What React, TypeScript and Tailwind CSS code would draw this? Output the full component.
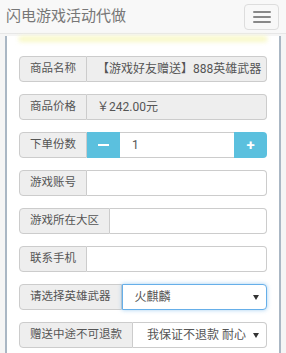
const font = { fontFamily: 'Roboto, "Noto Sans CJK SC", sans-serif' };

type Row = { label: string; value?: string; kind: "disabled" | "text" | "stepper" | "select" | "focusSelect" };

const rows: Row[] = [
  { label: "商品名称", value: "【游戏好友赠送】888英雄武器", kind: "disabled" },
  { label: "商品价格", value: "￥242.00元", kind: "disabled" },
  { label: "下单份数", value: "1", kind: "stepper" },
  { label: "游戏账号", kind: "text" },
  { label: "游戏所在大区", kind: "text" },
  { label: "联系手机", kind: "text" },
  { label: "请选择英雄武器", value: "火麒麟", kind: "focusSelect" },
  { label: "赠送中途不可退款", value: "我保证不退款 耐心", kind: "select" },
];

const Arrow = () => (
  <svg width="6" height="5" viewBox="0 0 6 5" className="shrink-0">
    <path d="M0 0h6L3 5z" fill="#333" />
  </svg>
);

const FieldRow = ({ row }: { row: Row }) => {
  const addon = (
    <div className="flex items-center shrink-0 h-full px-[10px] bg-[#eee] border border-[#ccc] rounded-l-[4px] text-[11.5px] text-[#555] whitespace-nowrap">
      {row.label}
    </div>
  );
  if (row.kind === "stepper") {
    return (
      <div className="flex h-[26px]">
        {addon}
        <div className="flex items-center justify-center w-[33px] h-full bg-[#5bc0de]">
          <div className="w-[11px] h-[2px] bg-white" />
        </div>
        <div className="flex items-center flex-1 h-full px-[12px] border-y border-[#ccc] text-[12px] text-[#555]">
          {row.value}
        </div>
        <div className="flex items-center justify-center w-[33px] h-full bg-[#5bc0de] rounded-r-[4px] text-white text-[15px] font-bold">
          +
        </div>
      </div>
    );
  }
  const base = "flex items-center flex-1 min-w-0 h-full border border-l-0 rounded-r-[4px] text-[12px] text-[#555] overflow-hidden whitespace-nowrap";
  if (row.kind === "disabled") {
    return (
      <div className="flex h-[26px]">
        {addon}
        <div className={`${base} bg-[#eee] border-[#ccc] pl-[10px] text-[12.5px]`}>{row.value}</div>
      </div>
    );
  }
  if (row.kind === "text") {
    return (
      <div className="flex h-[26px]">
        {addon}
        <div className={`${base} bg-white border-[#ccc]`} />
      </div>
    );
  }
  if (row.kind === "focusSelect") {
    return (
      <div className="flex h-[26px]">
        {addon}
        <div className="flex items-center justify-between flex-1 h-full pl-[12px] pr-[7px] border border-[#66afe9] rounded-r-[4px] bg-white text-[12px] text-[#555] shadow-[0_0_4px_rgba(102,175,233,0.6)]">
          <span>{row.value}</span>
          <Arrow />
        </div>
      </div>
    );
  }
  return (
    <div className="flex h-[26px]">
      {addon}
      <div className={`${base} justify-between bg-white border-[#ccc] pl-[14px] pr-[7px]`}>
        <span>{row.value}</span>
        <Arrow />
      </div>
    </div>
  );
};

export default function App() {
  return (
    <div className="w-[286px] h-[353px] overflow-hidden bg-[#f5f5f5]" style={font}>
      <nav className="flex items-center justify-between h-[34px] pl-[6px] pr-[7px] bg-[#f8f8f8] border-b border-[#e7e7e7]">
        <span className="text-[15px] text-[#777]">闪电游戏活动代做</span>
        <button className="flex flex-col items-center justify-center gap-[3px] w-[35px] h-[26px] border border-[#ddd] rounded-[4px] bg-[#f8f8f8]">
          <span className="block w-[18px] h-[2px] bg-[#888] rounded" />
          <span className="block w-[18px] h-[2px] bg-[#888] rounded" />
          <span className="block w-[18px] h-[2px] bg-[#888] rounded" />
        </button>
      </nav>
      <div className="mx-[5px] h-[319px] bg-white border-x-2 border-[#aab7c4]">
        <div className="mx-[12px] h-[6px] mt-[2px] bg-[#f8f8c8] blur-[2px]" />
        <div className="flex flex-col gap-[12px] px-[12px] pt-[14px]">
          {rows.map((r) => (
            <FieldRow key={r.label} row={r} />
          ))}
        </div>
      </div>
    </div>
  );
}
